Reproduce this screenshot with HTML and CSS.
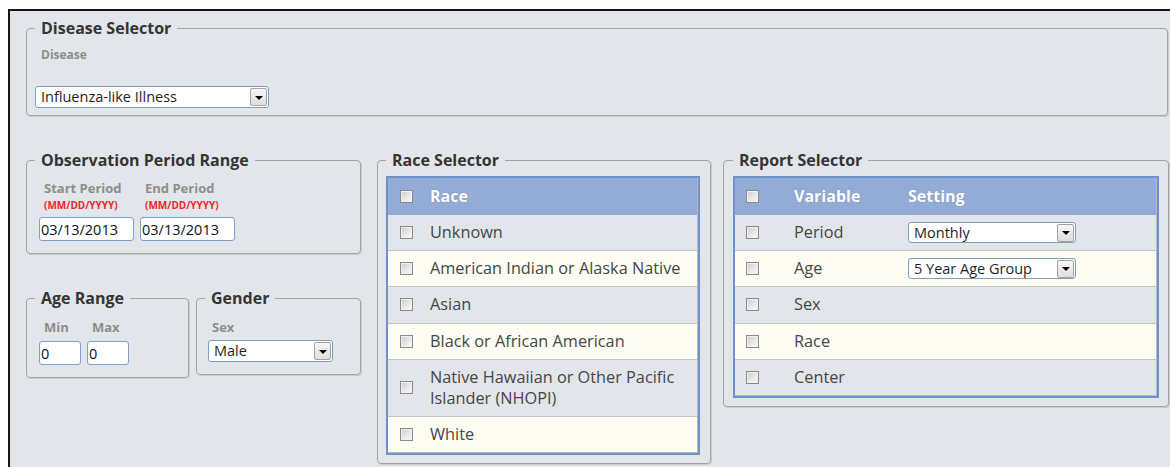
FILE: index.html
```html
<!DOCTYPE html>
<html lang="en">
<head>
<meta charset="utf-8">
<title>Surveillance Report Builder</title>
<link rel="stylesheet" href="styles.css">
</head>
<body>
<div class="frame">
  <fieldset class="box box-disease">
    <legend>Disease Selector</legend>
    <div class="label label-disease">Disease</div>
    <div class="dropdown dropdown-disease">
      <span class="dropdown-value">Influenza-like Illness</span>
      <span class="dropdown-btn"><span class="caret"></span></span>
    </div>
  </fieldset>

  <div class="selectors">
    <div class="col-left">
      <fieldset class="box box-period">
        <legend>Observation Period Range</legend>
        <div class="inline-fields">
          <div class="field">
            <div class="label">Start Period</div>
            <div class="hint">(MM/DD/YYYY)</div>
            <input class="text-input date-input" type="text" value="03/13/2013">
          </div>
          <div class="field">
            <div class="label">End Period</div>
            <div class="hint">(MM/DD/YYYY)</div>
            <input class="text-input date-input" type="text" value="03/13/2013">
          </div>
        </div>
      </fieldset>

      <div class="pair">
        <fieldset class="box box-age">
          <legend>Age Range</legend>
          <div class="inline-fields">
            <div class="field">
              <div class="label label-age">Min</div>
              <input class="text-input age-input" type="text" value="0">
            </div>
            <div class="field">
              <div class="label label-age">Max</div>
              <input class="text-input age-input" type="text" value="0">
            </div>
          </div>
        </fieldset>

        <fieldset class="box box-gender">
          <legend>Gender</legend>
          <div class="label label-sex">Sex</div>
          <div class="dropdown dropdown-sex">
            <span class="dropdown-value">Male</span>
            <span class="dropdown-btn"><span class="caret"></span></span>
          </div>
        </fieldset>
      </div>
    </div>

    <fieldset class="box box-race">
      <legend>Race Selector</legend>
      <div class="grid">
        <div class="grid-inner">
          <div class="grid-row race-row grid-head"><span class="check"></span><span>Race</span></div>
          <div class="grid-row race-row"><span class="check"></span><span>Unknown</span></div>
          <div class="grid-row race-row alt"><span class="check"></span><span>American Indian or Alaska Native</span></div>
          <div class="grid-row race-row"><span class="check"></span><span>Asian</span></div>
          <div class="grid-row race-row alt"><span class="check"></span><span>Black or African American</span></div>
          <div class="grid-row race-row"><span class="check"></span><span>Native Hawaiian or Other Pacific Islander (NHOPI)</span></div>
          <div class="grid-row race-row alt last"><span class="check"></span><span>White</span></div>
        </div>
      </div>
    </fieldset>

    <fieldset class="box box-report">
      <legend>Report Selector</legend>
      <div class="grid">
        <div class="grid-inner">
          <div class="grid-row report-row grid-head"><span class="check"></span><span>Variable</span><span>Setting</span></div>
          <div class="grid-row report-row"><span class="check"></span><span>Period</span>
            <div class="dropdown dropdown-setting">
              <span class="dropdown-value">Monthly</span>
              <span class="dropdown-btn"><span class="caret"></span></span>
            </div>
          </div>
          <div class="grid-row report-row alt"><span class="check"></span><span>Age</span>
            <div class="dropdown dropdown-setting">
              <span class="dropdown-value">5 Year Age Group</span>
              <span class="dropdown-btn"><span class="caret"></span></span>
            </div>
          </div>
          <div class="grid-row report-row"><span class="check"></span><span>Sex</span><span></span></div>
          <div class="grid-row report-row alt"><span class="check"></span><span>Race</span><span></span></div>
          <div class="grid-row report-row last"><span class="check"></span><span>Center</span><span></span></div>
        </div>
      </div>
    </fieldset>
  </div>
</div>
</body>
</html>
```

FILE: styles.css
```css
html, body {
  margin: 0;
  padding: 0;
  background: #ffffff;
  overflow: hidden;
}

body {
  font-family: "Open Sans", "Noto Sans", sans-serif;
  color: #474747;
}

/* outer panel */
.frame {
  margin: 9px 0 0 8px;
  height: 458px;
  box-sizing: border-box;
  border-top: 2px solid #161616;
  border-left: 2px solid #161616;
  background: #e2e5ea;
  padding: 7px 0 0 16px;
}

/* group boxes */
.box {
  margin: 0;
  box-sizing: border-box;
  border: 1px solid #a4a4a4;
  border-radius: 4px;
  box-shadow: 1px 1px 0 #c9cbcf;
  padding: 0 8px;
  min-inline-size: 0;
}

.box legend {
  padding: 0 6px;
  font-size: 16px;
  font-weight: 700;
  line-height: 20px;
  color: #353535;
}

.label {
  font-size: 13px;
  font-weight: 700;
  line-height: 16px;
  color: #8d8d8d;
  padding-left: 5px;
}

.hint {
  font-size: 10px;
  font-weight: 700;
  line-height: 11px;
  color: #f0262b;
  padding-left: 5px;
  margin-top: 4px;
}

/* disease */
.box-disease {
  width: 1142px;
  padding-bottom: 7px;
}

.label-disease {
  font-size: 12px;
  padding-left: 6px;
  margin-top: 9px;
}

.dropdown-disease {
  margin-top: 23px;
  width: 234px;
  height: 22px;
  font-size: 14.2px;
}

/* second row */
.selectors {
  display: flex;
  align-items: flex-start;
  margin-top: 34px;
}

.col-left {
  width: 335px;
  margin-right: 16px;
}

.box-period {
  width: 335px;
  padding-bottom: 12px;
}

.inline-fields {
  display: flex;
  gap: 6px;
  margin-left: 4px;
}

.box-period .label {
  margin-top: 10px;
}

.text-input {
  display: block;
  box-sizing: border-box;
  height: 24px;
  margin: 6px 0 0;
  padding: 0 0 0 1px;
  border: 1px solid #7fa0cc;
  border-radius: 3px;
  background: #ffffff;
  font-family: inherit;
  font-size: 14.5px;
  color: #111111;
  outline: none;
}

.date-input {
  width: 95px;
}

.pair {
  display: flex;
  align-items: flex-start;
  gap: 7px;
  margin-top: 34px;
}

.box-age {
  width: 163px;
  padding-bottom: 12px;
}

.label-age {
  margin-top: 11px;
}

.age-input {
  width: 42px;
}

.box-gender {
  width: 165px;
  padding-bottom: 12px;
}

.label-sex {
  margin-top: 11px;
  padding-left: 7px;
}

.dropdown-sex {
  margin: 5px 0 0 3px;
  width: 125px;
  height: 22px;
}

/* dropdowns */
.dropdown {
  display: flex;
  align-items: center;
  box-sizing: border-box;
  border: 1px solid #7f9dc3;
  border-radius: 3px;
  background: #ffffff;
  padding: 0 1px 0 5px;
  font-size: 14.5px;
  color: #1f1f1f;
}

.dropdown-value {
  flex: 1;
  line-height: 18px;
  white-space: nowrap;
}

.dropdown-btn {
  display: flex;
  align-items: center;
  justify-content: center;
  box-sizing: border-box;
  width: 17px;
  height: 18px;
  border: 1px solid #a2a2a2;
  border-radius: 2px;
  background: linear-gradient(#f6f6f6, #dedede);
}

.caret {
  width: 0;
  height: 0;
  border-left: 4px solid transparent;
  border-right: 4px solid transparent;
  border-top: 4px solid #000000;
  margin-top: 1px;
}

/* race / report tables */
.box-race {
  width: 334px;
  margin-right: 12px;
  padding: 0 10px 8px 8px;
}

.box-report {
  width: 446px;
  padding: 0 9px 8px 9px;
}

.grid {
  margin-top: 6px;
  border: 2px solid #6d93ca;
}

.grid-inner {
  border-right: 1px solid #b9b9b9;
  border-bottom: 1px solid #b9b9b9;
}

.grid-row {
  display: grid;
  align-items: center;
  padding: 7.1px 0;
  line-height: 21px;
  font-size: 16.3px;
  color: #464646;
  background: #e2e5ea;
  border-bottom: 1px solid #c2c4c8;
}

.grid-row.alt {
  background: #fdfdf3;
}

.grid-row.last {
  border-bottom: 0;
}

.grid-head {
  padding: 8px 0;
  background: #94acd5;
  border-bottom: 0;
  color: #ffffff;
  font-weight: 700;
  font-size: 16px;
  text-shadow: 0 0 1px rgba(80, 100, 140, 0.6);
}

.race-row {
  grid-template-columns: 42px 1fr;
  padding-right: 16px;
}

.race-row .check {
  margin-left: 12px;
}

.report-row {
  grid-template-columns: 59px 114px 1fr;
}

.report-row .check {
  margin-left: 11px;
}

.dropdown-setting {
  width: 168px;
  height: 21px;
}

/* checkboxes */
.check {
  display: block;
  box-sizing: border-box;
  width: 13px;
  height: 13px;
  border: 1px solid #8a8a8a;
  background: linear-gradient(135deg, #cbcbcb 0%, #e8e8e8 55%, #fbfbfb 100%);
  box-shadow: inset 0 0 0 1px #f0f0f0;
}
```
